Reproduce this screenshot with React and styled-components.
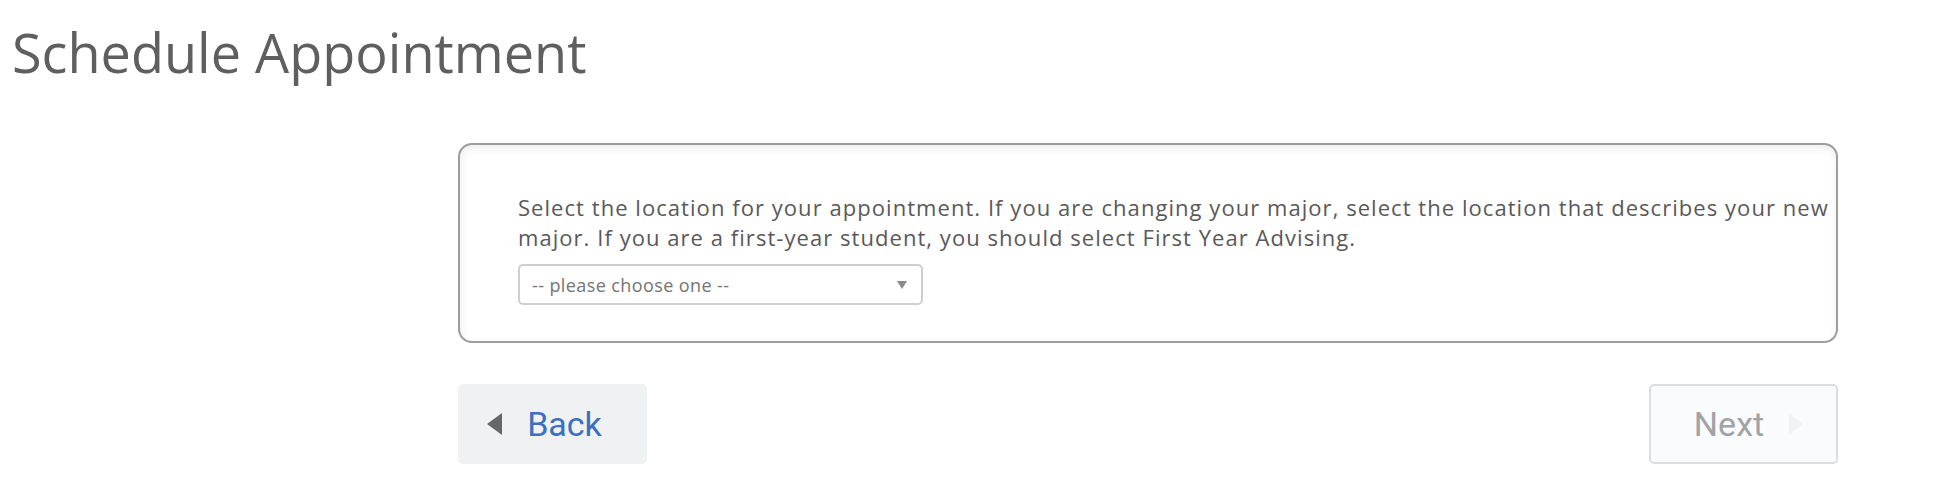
import React from 'react';
import styled, { createGlobalStyle } from 'styled-components';

const GlobalStyle = createGlobalStyle`
    body {
        margin: 0;
        background: #ffffff;
        font-family: "Open Sans", "Liberation Sans", sans-serif;
    }
`;

const Page = styled.div`
    padding: 14px 0 0 12px;
`;

const Title = styled.h1`
    margin: 0;
    font-size: 54px;
    font-weight: 400;
    line-height: 76px;
    color: #5f5f5f;
`;

const Main = styled.div`
    width: 1380px;
    margin: 53px 0 0 446px;
`;

const Card = styled.div`
    border: 2px solid #9d9d9d;
    border-radius: 14px;
    background: #ffffff;
    box-shadow: inset 1px 3px 10px rgba(0, 0, 0, 0.07);
    padding: 47px 0 36px 58px;
`;

const Prompt = styled.p`
    margin: 0 -24px 0 0;
    font-size: 22px;
    letter-spacing: 1.05px;
    line-height: 30px;
    color: #595959;
`;

const SelectBox = styled.div`
    margin-top: 12px;
    width: 405px;
    height: 41px;
    box-sizing: border-box;
    border: 2px solid #cfcfcf;
    border-radius: 5px;
    display: flex;
    align-items: center;
    justify-content: space-between;
    padding: 0 14px 0 12px;
    font-size: 18px;
    letter-spacing: 0.4px;
    color: #747474;
    background: #fff;
`;

const Caret = styled.span`
    width: 0;
    height: 0;
    border-left: 5px solid transparent;
    border-right: 5px solid transparent;
    border-top: 8px solid #8a8a8a;
`;

const Actions = styled.div`
    margin-top: 41px;
    display: flex;
    justify-content: space-between;
`;

const NavButton = styled.button`
    width: 189px;
    height: 80px;
    box-sizing: border-box;
    border-radius: 5px;
    border: 2px solid ${p => (p.$disabled ? '#dcdde0' : '#f0f1f3')};
    background: ${p => (p.$disabled ? '#fafbfc' : '#f0f1f3')};
    color: ${p => (p.$disabled ? '#a1a3a7' : '#3a70bf')};
    font-family: Roboto, "Liberation Sans", sans-serif;
    font-size: 34px;
    display: flex;
    align-items: center;
    justify-content: center;
    gap: 25px;
    padding: ${p => (p.$disabled ? '0 0 0 10px' : '0 16px 0 0')};
    cursor: ${p => (p.$disabled ? 'default' : 'pointer')};
`;

const Arrow = styled.span`
    width: 0;
    height: 0;
    border-top: 11px solid transparent;
    border-bottom: 11px solid transparent;
    ${p => p.$left
        ? 'border-right: 15px solid #666666;'
        : 'border-left: 14px solid #f1f2f4;'}
`;

export default function App() {
    return (
        <Page>
            <GlobalStyle />
            <Title>Schedule Appointment</Title>
            <Main>
                <Card>
                    <Prompt>
                        Select the location for your appointment. If you are changing your major, select the location that describes your new major. If you are a first-year student, you should select First Year Advising.
                    </Prompt>
                    <SelectBox>
                        <span>-- please choose one --</span>
                        <Caret />
                    </SelectBox>
                </Card>
                <Actions>
                    <NavButton>
                        <Arrow $left />
                        Back
                    </NavButton>
                    <NavButton $disabled>
                        Next
                        <Arrow />
                    </NavButton>
                </Actions>
            </Main>
        </Page>
    );
}
